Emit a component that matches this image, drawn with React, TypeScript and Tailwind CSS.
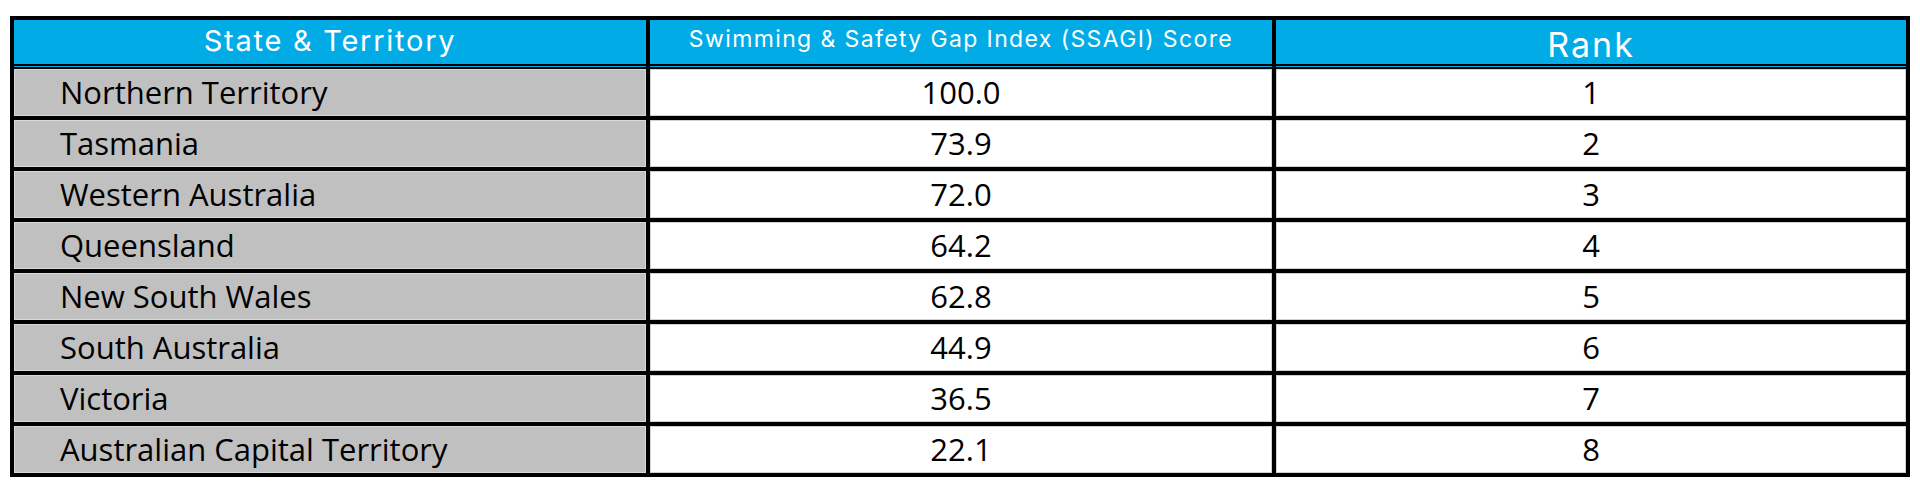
import React from "react";

const rows: [string, string, string][] = [
  ["Northern Territory", "100.0", "1"],
  ["Tasmania", "73.9", "2"],
  ["Western Australia", "72.0", "3"],
  ["Queensland", "64.2", "4"],
  ["New South Wales", "62.8", "5"],
  ["South Australia", "44.9", "6"],
  ["Victoria", "36.5", "7"],
  ["Australian Capital Territory", "22.1", "8"],
];

const bodyFont = { fontFamily: '"Open Sans", "Noto Sans", sans-serif' };
const headFont = { fontFamily: 'Inter, "Open Sans", sans-serif' };

function HeadCell({ children, textClass }: { children: React.ReactNode; textClass: string }) {
  return (
    <div className="flex flex-col bg-[#00abe6]">
      <div className="h-[44px] flex items-center justify-center">
        <span className={textClass} style={headFont}>
          {children}
        </span>
      </div>
      <div className="h-[2px] bg-black" />
      <div className="h-[1px] bg-[#00abe6]" />
    </div>
  );
}

export default function App() {
  return (
    <div className="w-[1920px] h-[484px] bg-white pt-[16px] pl-[10px]">
      <div className="w-[1900px] bg-black p-[4px] flex flex-col">
        <div className="grid grid-cols-[632px_622px_630px] gap-x-[4px]">
          <HeadCell textClass="text-white text-[29px] tracking-[0.06em] leading-none pb-[3px]">
            State &amp; Territory
          </HeadCell>
          <HeadCell textClass="text-white text-[23px] tracking-[0.06em] leading-none pb-[5px]">
            Swimming &amp; Safety Gap Index (SSAGI) Score
          </HeadCell>
          <HeadCell textClass="text-white text-[34px] tracking-[0.06em] leading-none pt-[6px]">
            Rank
          </HeadCell>
        </div>
        {rows.map(([name, score, rank], i) => (
          <div
            key={name}
            className={`grid grid-cols-[632px_622px_630px] gap-x-[4px] ${i === 0 ? "mt-[2px]" : "mt-[4px]"}`}
          >
            <div
              className="h-[47px] bg-[#c0c0c0] border border-[#d8d8d8] flex items-center pl-[45px] text-black text-[31px] leading-none"
              style={bodyFont}
            >
              {name}
            </div>
            <div
              className="h-[47px] bg-white border border-[#d0d0d0] flex items-center justify-center text-black text-[31px] leading-none"
              style={bodyFont}
            >
              {score}
            </div>
            <div
              className="h-[47px] bg-white border border-[#d0d0d0] flex items-center justify-center text-black text-[31px] leading-none"
              style={bodyFont}
            >
              {rank}
            </div>
          </div>
        ))}
      </div>
    </div>
  );
}
